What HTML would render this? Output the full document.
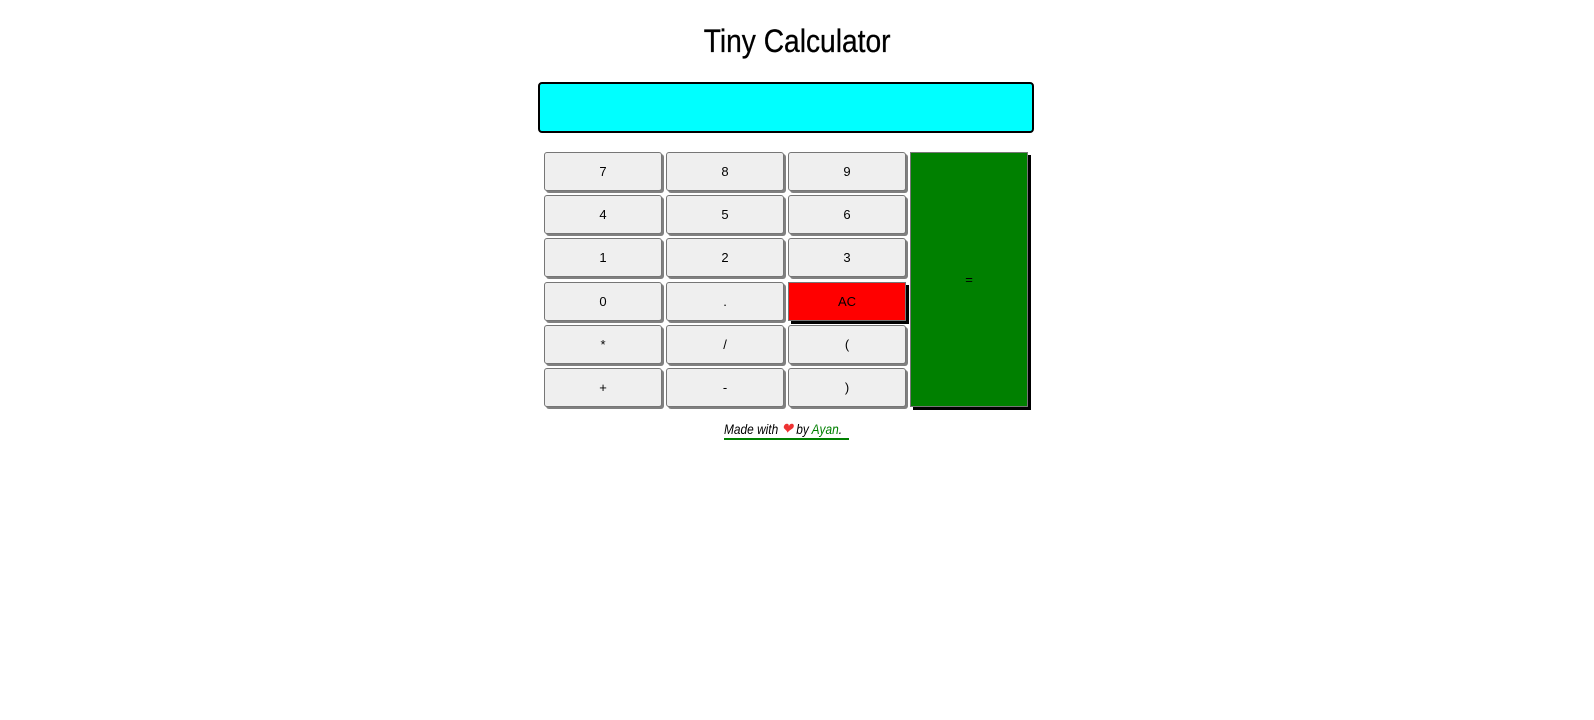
<!DOCTYPE html>
<html><head><style>
body{margin:0;background:#fff;font-family:"Liberation Sans",sans-serif;}
h1{position:absolute;top:22px;left:0;width:1594px;text-align:center;margin:0;font-weight:normal;font-size:32px;line-height:38px;}
h1 span{display:inline-block;transform:scaleX(0.88);-webkit-text-stroke:0.3px #000;}
.disp{position:absolute;left:538px;top:82px;width:492px;height:47px;background:#0ff;border:2px solid #000;border-radius:4px;}
.b{position:absolute;width:116px;height:37px;background:#efefef;border:1px solid #767676;border-radius:3px;box-shadow:2px 2px 0 #808080;font-size:13px;text-align:center;line-height:37px;color:#000;}
.ac{background:#f00;border-radius:0;border:1px solid #777;box-shadow:3px 3px 0 #000;}
.eq{position:absolute;left:910px;top:152px;width:116px;height:253px;background:#008000;border:1px solid #777;box-shadow:3px 3px 0 #000;font-size:13px;text-align:center;line-height:253px;}
.f{position:absolute;top:421px;left:724px;font-style:italic;font-size:14px;border-bottom:2px solid #008000;line-height:17px;white-space:nowrap;}
.f span.i{display:inline-block;transform:scaleX(0.85);transform-origin:left;}
</style></head><body>
<h1><span>Tiny Calculator</span></h1>
<div class="disp"></div>
<div class="b" style="left:544px;top:152px">7</div>
<div class="b" style="left:666px;top:152px">8</div>
<div class="b" style="left:788px;top:152px">9</div>
<div class="b" style="left:544px;top:195px">4</div>
<div class="b" style="left:666px;top:195px">5</div>
<div class="b" style="left:788px;top:195px">6</div>
<div class="b" style="left:544px;top:238px">1</div>
<div class="b" style="left:666px;top:238px">2</div>
<div class="b" style="left:788px;top:238px">3</div>
<div class="b" style="left:544px;top:282px">0</div>
<div class="b" style="left:666px;top:282px">.</div>
<div class="b ac" style="left:788px;top:282px">AC</div>
<div class="b" style="left:544px;top:325px">*</div>
<div class="b" style="left:666px;top:325px">/</div>
<div class="b" style="left:788px;top:325px">(</div>
<div class="b" style="left:544px;top:368px">+</div>
<div class="b" style="left:666px;top:368px">-</div>
<div class="b" style="left:788px;top:368px">)</div>
<div class="eq">=</div>
<div class="f" style="width:125px"><span class="i">Made with <span style="color:#e33;font-size:16px">❤</span> by <span style="color:#008000">Ayan</span>.</span></div>
</body></html>
